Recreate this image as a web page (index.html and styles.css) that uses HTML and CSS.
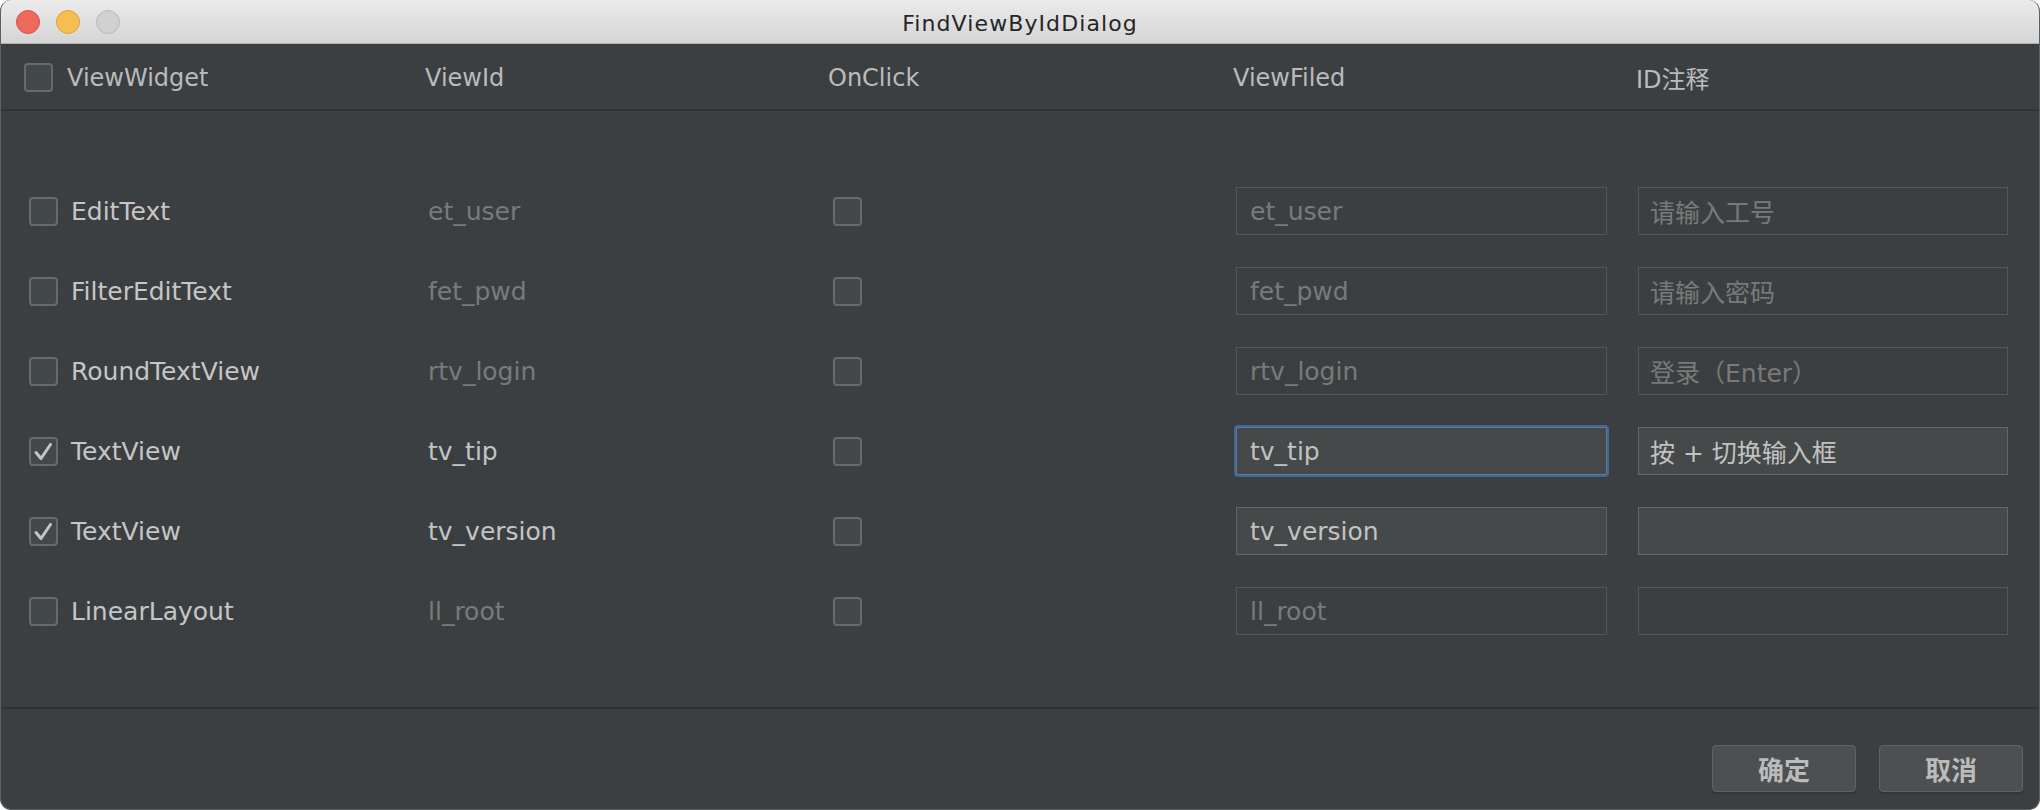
FILE: index.html
```html
<!DOCTYPE html>
<html lang="zh">
<head>
<meta charset="utf-8">
<title>FindViewByIdDialog</title>
<link rel="stylesheet" href="styles.css">
</head>
<body>
<div class="window">
  <div class="titlebar">
    <div class="lights">
      <span class="light red"></span>
      <span class="light yellow"></span>
      <span class="light gray"></span>
    </div>
    <div class="title">FindViewByIdDialog</div>
    <div></div>
  </div>

  <div class="header">
    <div class="cell first"><span class="cb"></span><span class="hlabel">ViewWidget</span></div>
    <div class="cell"><span class="hlabel">ViewId</span></div>
    <div class="cell"><span class="hlabel">OnClick</span></div>
    <div class="cell"><span class="hlabel">ViewFiled</span></div>
    <div class="cell"><span class="hlabel">ID注释</span></div>
  </div>

  <div class="body">
    <div class="row">
      <div class="cell first"><span class="cb"></span><span class="label">EditText</span></div>
      <div class="cell"><span class="vid off">et_user</span></div>
      <div class="cell"><span class="cb"></span></div>
      <div class="cell"><div class="field off">et_user</div></div>
      <div class="cell"><div class="field off cjk">请输入工号</div></div>
    </div>
    <div class="row">
      <div class="cell first"><span class="cb"></span><span class="label">FilterEditText</span></div>
      <div class="cell"><span class="vid off">fet_pwd</span></div>
      <div class="cell"><span class="cb"></span></div>
      <div class="cell"><div class="field off">fet_pwd</div></div>
      <div class="cell"><div class="field off cjk">请输入密码</div></div>
    </div>
    <div class="row">
      <div class="cell first"><span class="cb"></span><span class="label">RoundTextView</span></div>
      <div class="cell"><span class="vid off">rtv_login</span></div>
      <div class="cell"><span class="cb"></span></div>
      <div class="cell"><div class="field off">rtv_login</div></div>
      <div class="cell"><div class="field off cjk">登录（Enter）</div></div>
    </div>
    <div class="row">
      <div class="cell first"><span class="cb checked"><svg viewBox="0 0 29 29" width="29" height="29"><path d="M7 15.5 L12 21.5 L21.5 7.5" fill="none" stroke="#c4c4c4" stroke-width="3" stroke-linecap="round" stroke-linejoin="round"/></svg></span><span class="label">TextView</span></div>
      <div class="cell"><span class="vid on">tv_tip</span></div>
      <div class="cell"><span class="cb"></span></div>
      <div class="cell"><div class="field on focus">tv_tip</div></div>
      <div class="cell"><div class="field on cjk">按 + 切换输入框</div></div>
    </div>
    <div class="row">
      <div class="cell first"><span class="cb checked"><svg viewBox="0 0 29 29" width="29" height="29"><path d="M7 15.5 L12 21.5 L21.5 7.5" fill="none" stroke="#c4c4c4" stroke-width="3" stroke-linecap="round" stroke-linejoin="round"/></svg></span><span class="label">TextView</span></div>
      <div class="cell"><span class="vid on">tv_version</span></div>
      <div class="cell"><span class="cb"></span></div>
      <div class="cell"><div class="field on">tv_version</div></div>
      <div class="cell"><div class="field on cjk"></div></div>
    </div>
    <div class="row">
      <div class="cell first"><span class="cb"></span><span class="label">LinearLayout</span></div>
      <div class="cell"><span class="vid off">ll_root</span></div>
      <div class="cell"><span class="cb"></span></div>
      <div class="cell"><div class="field off">ll_root</div></div>
      <div class="cell"><div class="field off cjk"></div></div>
    </div>
  </div>

  <div class="footer">
    <button class="btn">确定</button>
    <button class="btn">取消</button>
  </div>
</div>
</body>
</html>
```

FILE: styles.css
```css
html, body {
  margin: 0;
  padding: 0;
  background: #ffffff;
}

.window {
  width: 2040px;
  height: 810px;
  box-sizing: border-box;
  border-radius: 11px;
  overflow: hidden;
  background: #3c3f41;
  border: 1px solid #5d6062;
  border-top: none;
  display: flex;
  flex-direction: column;
  font-family: "DejaVu Sans", "Noto Sans CJK SC", sans-serif;
}

.titlebar {
  height: 44px;
  flex: none;
  box-sizing: border-box;
  background: linear-gradient(#ebebeb, #d5d5d5);
  border-bottom: 1px solid #b0b0b0;
  display: grid;
  grid-template-columns: 1fr auto 1fr;
  align-items: center;
}

.lights {
  display: flex;
  gap: 16px;
  padding-left: 15px;
}

.light {
  width: 24px;
  height: 24px;
  border-radius: 50%;
  box-sizing: border-box;
}

.light.red { background: #ee6a5f; border: 1px solid #d5524a; }
.light.yellow { background: #f6be4f; border: 1px solid #d9a140; }
.light.gray { background: #d1d1d1; border: 1px solid #b9b9b9; }

.title {
  font-family: "DejaVu Sans", sans-serif;
  font-size: 22px;
  letter-spacing: 1.1px;
  color: #262626;
  padding-top: 3px;
}

.header {
  height: 67px;
  flex: none;
  box-sizing: border-box;
  border-bottom: 2px solid #303234;
  padding-left: 23px;
  padding-top: 2px;
  display: grid;
  grid-template-columns: 401px 403px 405px 403px 1fr;
  align-items: center;
}

.cell {
  display: flex;
  align-items: center;
}

.header .cell.first .cb {
  margin-right: 14px;
}

.hlabel {
  font-size: 24px;
  color: #bbbbbb;
  font-family: "DejaVu Sans", "Noto Sans CJK SC", sans-serif;
}

.body {
  flex: 1;
  box-sizing: border-box;
  border-bottom: 2px solid #2f3133;
  padding-top: 60px;
}

.row {
  height: 80px;
  padding-left: 28px;
  display: grid;
  grid-template-columns: 399px 405px 403px 402px 370px;
  align-items: center;
}

.cb {
  width: 29px;
  height: 29px;
  box-sizing: border-box;
  border: 2px solid #686b6d;
  border-radius: 4px;
  background: #43494a;
  display: inline-flex;
  align-items: center;
  justify-content: center;
  flex: none;
}

.cb.checked svg {
  display: block;
  margin: -2px;
}

.row .cell.first .cb {
  margin-right: 13px;
}

.label {
  font-size: 25px;
  color: #c6c6c6;
}

.vid {
  font-size: 25px;
}

.vid.off { color: #7a7a7a; }
.vid.on { color: #c4c4c4; }

.field {
  width: 371px;
  height: 48px;
  box-sizing: border-box;
  padding-left: 13px;
  display: flex;
  align-items: center;
  font-size: 25px;
  white-space: nowrap;
}

.field.cjk {
  width: 370px;
  font-family: "DejaVu Sans", "Noto Sans CJK SC", sans-serif;
  font-size: 25px;
  padding-left: 11px;
}

.field.off {
  border: 1px solid #545658;
  background: #3c3f41;
  color: #7a7a7a;
}

.field.on {
  border: 1px solid #646668;
  background: #45494a;
  color: #c2c2c2;
}

.field.focus {
  border: 1px solid #5a7da8;
  box-shadow: 0 0 0 2px #45668f;
  border-radius: 2px;
}

.footer {
  height: 100px;
  flex: none;
  box-sizing: border-box;
  padding: 36px 16px 0 0;
  display: flex;
  justify-content: flex-end;
  align-items: flex-start;
  gap: 23px;
}

.btn {
  width: 144px;
  height: 47px;
  box-sizing: border-box;
  background: #4c5052;
  border: 1px solid #5f6365;
  border-radius: 4px;
  box-shadow: 0 2px 1px #343638;
  color: #bbbbbb;
  font-family: "Noto Sans CJK SC", sans-serif;
  font-weight: bold;
  font-size: 26px;
  padding: 0;
}
```
